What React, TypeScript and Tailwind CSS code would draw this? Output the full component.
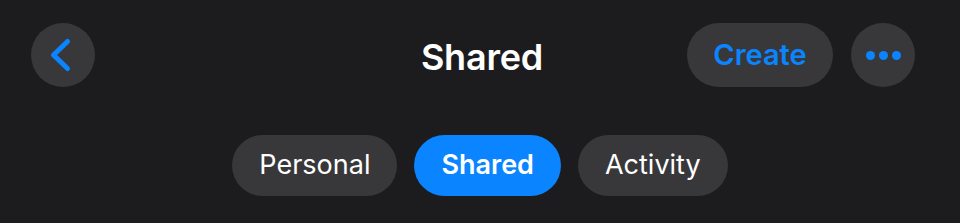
const tabs = ['Personal', 'Shared', 'Activity'];

export default function App() {
    const active = 'Shared';

    return (
        <div
            className="w-[960px] h-[223px] bg-[#1c1c1e] overflow-hidden"
            style={{ fontFamily: 'Inter, "Noto Sans", sans-serif' }}
        >
            {/* top bar */}
            <div className="grid grid-cols-[1fr_auto_1fr] items-center px-[31px] pt-[23px]">
                <div className="flex">
                    <button className="w-16 h-16 rounded-full bg-[#38383a]">
                        <svg width="64" height="64" viewBox="0 0 64 64" fill="none">
                            <polyline
                                points="36.5,18.5 22.5,32 36.5,45.5"
                                stroke="#0a84ff"
                                strokeWidth="5"
                                strokeLinecap="round"
                                strokeLinejoin="round"
                            />
                        </svg>
                    </button>
                </div>
                <h1 className="text-[36px] font-semibold text-white tracking-[-0.2px] ml-[4px] pt-[3px]">Shared</h1>
                <div className="flex justify-end items-center gap-[18px] mr-[14px]">
                    <button className="h-16 w-[146px] rounded-full bg-[#38383a] text-[#0a84ff] text-[29px] font-semibold">
                        Create
                    </button>
                    <button className="w-16 h-16 rounded-full bg-[#38383a] flex items-center justify-center gap-[4px]">
                        <span className="w-[9px] h-[9px] rounded-full bg-[#0a84ff]" />
                        <span className="w-[9px] h-[9px] rounded-full bg-[#0a84ff]" />
                        <span className="w-[9px] h-[9px] rounded-full bg-[#0a84ff]" />
                    </button>
                </div>
            </div>

            {/* segmented tabs */}
            <div className="flex justify-center gap-[17px] mt-[48px]">
                {tabs.map(tab => (
                    <button
                        key={tab}
                        className={
                            tab === active
                                ? 'h-[61px] px-[27px] rounded-full bg-[#0a84ff] text-white text-[27px] font-semibold'
                                : 'h-[61px] px-[27px] rounded-full bg-[#38383a] text-white text-[27px]'
                        }
                    >
                        {tab}
                    </button>
                ))}
            </div>
        </div>
    );
}
